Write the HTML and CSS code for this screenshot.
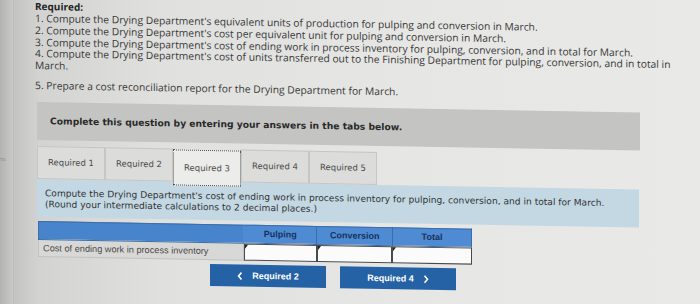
FILE: index.html
```html
<!DOCTYPE html>
<html lang="en">
<head>
  <meta charset="UTF-8" />
  <meta name="viewport" content="width=device-width, initial-scale=1.0"/>
  <title>Drying Department - Required 3</title>
  <link rel="stylesheet" href="styles.css">
</head>
<body>
  <div class="screen">
    <div class="side"><span class="side-label">ns</span></div>

    <main class="sheet">
      <h3 class="req-title">Required:</h3>
      <div class="req-list">
        <p>1. Compute the Drying Department's equivalent units of production for pulping and conversion in March.</p>
        <p>2. Compute the Drying Department's cost per equivalent unit for pulping and conversion in March.</p>
        <p>3. Compute the Drying Department's cost of ending work in process inventory for pulping, conversion, and in total for March.</p>
        <p>4. Compute the Drying Department's cost of units transferred out to the Finishing Department for pulping, conversion, and in total in March.</p>
        <p class="last">5. Prepare a cost reconciliation report for the Drying Department for March.</p>
      </div>

      <div class="prompt">Complete this question by entering your answers in the tabs below.</div>

      <div class="tabs">
        <button class="tab">Required 1</button>
        <button class="tab">Required 2</button>
        <button class="tab active">Required 3</button>
        <button class="tab">Required 4</button>
        <button class="tab">Required 5</button>
      </div>

      <div class="instructions">
        <p>Compute the Drying Department's cost of ending work in process inventory for pulping, conversion, and in total for March.</p>
        <p>(Round your intermediate calculations to 2 decimal places.)</p>
      </div>

      <table class="answer">
        <tr>
          <th class="col-label"></th>
          <th class="col-pulp">Pulping</th>
          <th class="col-conv">Conversion</th>
          <th class="col-total">Total</th>
        </tr>
        <tr>
          <td class="row-label">Cost of ending work in process inventory</td>
          <td class="cell"><div class="cell-input"></div></td>
          <td class="cell"><div class="cell-input"></div></td>
          <td class="cell"><div class="cell-input"></div></td>
        </tr>
      </table>

      <div class="nav">
        <button class="nav-btn">
          <svg width="6" height="9" viewBox="0 0 6 9"><polyline points="4.5,1 1.5,4.5 4.5,8" fill="none" stroke="#fff" stroke-width="1.6"/></svg>
          Required 2
        </button>
        <button class="nav-btn">
          Required 4
          <svg width="6" height="9" viewBox="0 0 6 9"><polyline points="1.5,1 4.5,4.5 1.5,8" fill="none" stroke="#fff" stroke-width="1.6"/></svg>
        </button>
      </div>
    </main>
  </div>
</body>
</html>
```

FILE: styles.css
```css
body {
  margin: 0;
  height: 304px;
  overflow: hidden;
  font-family: 'Open Sans', sans-serif;
  background: linear-gradient(to right, #a9a9a7 0, #c4c4c2 14px, #d3d3d1 40px, #e0e0de 160px, #e6e6e4 400px, #e9e9e7 100%);
}
.screen { display: flex; height: 304px; }
.side {
  flex-shrink: 0;
  width: 13px;
  border-right: 1px solid #bcbcba;
  background: linear-gradient(to right, #b3b3b1, #c9c9c7);
  padding-top: 144px;
  overflow: hidden;
}
.side-label { font-size: 6px; color: #8c8c8a; margin-left: -1px; }

.sheet {
  flex-shrink: 0;
  margin-left: 21px;
  width: 642px;
  transform: skewY(1deg);
  transform-origin: 0 0;
}
.req-title { margin: 0; font-size: 10px; line-height: 12px; font-weight: 700; color: #232323; }
.req-list { margin-top: 1px; }
.req-list p { margin: 0; font-size: 10.3px; line-height: 11.8px; color: #383838; }
.req-list .last { margin-top: 8px; }

.prompt {
  margin: 10px 0 0 2px;
  width: 590px;
  height: 38px;
  padding-left: 13px;
  display: flex;
  align-items: center;
  background: #c4c5c3;
  font-family: 'DejaVu Sans', sans-serif;
  font-weight: 700;
  font-size: 9.2px;
  color: #2a2a2a;
}

.tabs { display: flex; height: 33px; margin: 6px 0 0 2px; }
.tab {
  width: 68px;
  height: 33px;
  padding: 0 0 0 10px;
  text-align: left;
  background: #dcdcda;
  border: 1px solid #c6c6c4;
  font-family: 'DejaVu Sans', sans-serif;
  font-size: 8.5px;
  color: #4a4a4a;
}
.tab.active {
  position: relative;
  z-index: 1;
  height: 36px;
  margin-top: 1px;
  background: #ececea;
  border: 1px dotted #555;
}

.instructions {
  margin-left: 2px;
  width: 586px;
  padding: 9px 8px 7px;
  background: #c3d8e3;
  font-family: 'DejaVu Sans', sans-serif;
  font-size: 9.1px;
  line-height: 11px;
  color: #333;
}
.instructions p { margin: 0; }

.answer {
  margin: 4px 0 0 3px;
  width: 434px;
  border-collapse: collapse;
  font-family: 'Liberation Sans', sans-serif;
}
.answer th {
  height: 17px;
  padding: 0;
  background: #4e8bd3;
  border: 1px solid #3a6daa;
  font-size: 9px;
  font-weight: 700;
  color: #17335e;
}
.answer th.col-label { border-right-color: #4e8bd3; background: #4784cc; }
.col-label { width: 207px; }
.col-pulp { width: 73px; }
.col-conv { width: 75px; }
.col-total { width: 79px; }
.row-label {
  height: 16px;
  padding: 0 0 0 4px;
  background: #d8d8d6;
  border: 1px solid #c2c2c0;
  font-size: 9.2px;
  color: #4a4a4a;
}
.cell { padding: 0; background: #e2e2e0; }
.cell-input {
  position: relative;
  height: 15px;
  background: #fbfbfb;
  border: 1px solid #4a4a4a;
}
.cell-input::before {
  content: "";
  position: absolute;
  left: 0;
  top: 0;
  border-top: 4px solid #222;
  border-right: 3px solid transparent;
}

.nav { display: flex; justify-content: center; gap: 14px; width: 592px; margin: 4px 0 0 2px; }
.nav-btn {
  width: 116px;
  height: 22px;
  display: flex;
  align-items: center;
  justify-content: center;
  gap: 9px;
  background: #2461a5;
  border: none;
  font-family: 'Liberation Sans', sans-serif;
  font-size: 9px;
  font-weight: 700;
  color: #fff;
}
```
